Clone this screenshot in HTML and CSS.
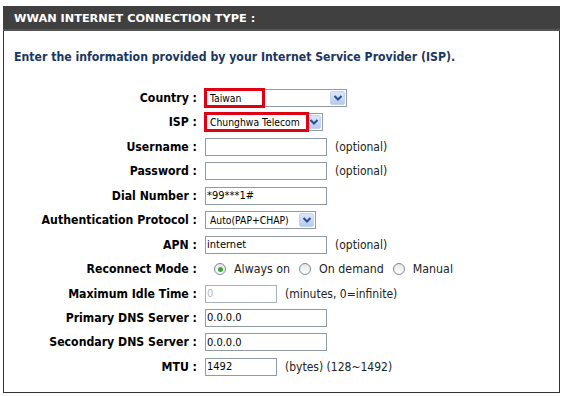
FILE: index.html
```html
<!DOCTYPE html>
<html lang="en">
<head>
    <meta charset="UTF-8">
    <title>WWAN Internet Connection Type</title>
    <link rel="stylesheet" href="styles.css">
</head>
<body>
<div class="panel">
    <h2 class="panel-title">WWAN INTERNET CONNECTION TYPE :</h2>
    <div class="panel-body">
        <p class="intro">Enter the information provided by your Internet Service Provider (ISP).</p>

        <div class="form">
            <label class="label">Country :</label>
            <div class="field">
                <div class="select select-wide">
                    <span class="select-value">Taiwan</span>
                    <span class="select-btn"><svg width="10" height="8" viewBox="0 0 10 8"><path d="M1.5 2 L5 5.5 L8.5 2" fill="none" stroke="#2a4d8f" stroke-width="2"/></svg></span>
                    <span class="mark mark-country"></span>
                </div>
            </div>

            <label class="label">ISP :</label>
            <div class="field">
                <div class="select select-isp">
                    <span class="select-value">Chunghwa Telecom</span>
                    <span class="select-btn"><svg width="10" height="8" viewBox="0 0 10 8"><path d="M1.5 2 L5 5.5 L8.5 2" fill="none" stroke="#2a4d8f" stroke-width="2"/></svg></span>
                    <span class="mark mark-isp"></span>
                </div>
            </div>

            <label class="label">Username :</label>
            <div class="field"><input class="text" type="text"><span class="note">(optional)</span></div>

            <label class="label">Password :</label>
            <div class="field"><input class="text" type="password"><span class="note">(optional)</span></div>

            <label class="label">Dial Number :</label>
            <div class="field"><input class="text" type="text" value="*99***1#"></div>

            <label class="label">Authentication Protocol :</label>
            <div class="field">
                <div class="select select-mid">
                    <span class="select-value">Auto(PAP+CHAP)</span>
                    <span class="select-btn"><svg width="10" height="8" viewBox="0 0 10 8"><path d="M1.5 2 L5 5.5 L8.5 2" fill="none" stroke="#2a4d8f" stroke-width="2"/></svg></span>
                </div>
            </div>

            <label class="label">APN :</label>
            <div class="field"><input class="text" type="text" value="internet"><span class="note">(optional)</span></div>

            <label class="label">Reconnect Mode :</label>
            <div class="field radios">
                <span class="radio checked"></span><span class="radio-text">Always on</span>
                <span class="radio"></span><span class="radio-text">On demand</span>
                <span class="radio"></span><span class="radio-text">Manual</span>
            </div>

            <label class="label">Maximum Idle Time :</label>
            <div class="field"><input class="text short" type="text" value="0" disabled><span class="note">(minutes, 0=infinite)</span></div>

            <label class="label">Primary DNS Server :</label>
            <div class="field"><input class="text" type="text" value="0.0.0.0"></div>

            <label class="label">Secondary DNS Server :</label>
            <div class="field"><input class="text" type="text" value="0.0.0.0"></div>

            <label class="label">MTU :</label>
            <div class="field"><input class="text short" type="text" value="1492"><span class="note">(bytes) (128~1492)</span></div>
        </div>
    </div>
</div>
</body>
</html>
```

FILE: styles.css
```css
body {
    margin: 0;
    padding: 0;
    background-color: #fff;
    font-family: "DejaVu Sans", Verdana, sans-serif;
    color: #000;
}

.panel {
    width: 557px;
    margin: 6px 0 0 3px;
}

.panel-title {
    margin: 0;
    height: 25px;
    line-height: 25px;
    padding-left: 11px;
    background-color: #404040;
    border-bottom: 2px solid #555;
    box-sizing: border-box;
    color: #fff;
    font-size: 11.3px;
    font-weight: bold;
}

.panel-body {
    border: 1px solid #333;
    border-top: none;
    height: 362px;
    box-sizing: border-box;
}

.intro {
    margin: 0;
    padding: 18px 0 0 10px;
    line-height: 16px;
    font-size: 12.2px;
    font-weight: bold;
    font-stretch: condensed;
    color: #1b3660;
}

.form {
    display: grid;
    grid-template-columns: 193px 1fr;
    grid-auto-rows: 18px;
    column-gap: 8px;
    row-gap: 6.45px;
    margin-top: 24px;
}

.label {
    text-align: right;
    font-size: 12.2px;
    font-weight: bold;
    font-stretch: condensed;
    line-height: 18px;
}

.field {
    display: flex;
    align-items: center;
}

.text {
    width: 122px;
    height: 18px;
    box-sizing: border-box;
    margin: 0;
    padding: 0 1px;
    border: 1px solid #8f9aa6;
    font-family: "DejaVu Sans", sans-serif;
    font-stretch: condensed;
    font-size: 11px;
    color: #000;
    background: #fff;
}

.text.short {
    width: 72px;
}

.text:disabled {
    color: #b8b8b8;
    border-color: #a8b0b8;
}

.note {
    margin-left: 8px;
    font-size: 12px;
    font-stretch: condensed;
    color: #222;
}

.select {
    position: relative;
    display: flex;
    align-items: center;
    height: 18px;
    box-sizing: border-box;
    border: 1px solid #8f9aa6;
    background: #fff;
    font-size: 10.3px;
    font-stretch: condensed;
}

.select-wide {
    width: 142px;
}

.select-isp {
    width: 118px;
}

.select-mid {
    width: 111px;
}

.select-value {
    flex: 1;
    padding-left: 4px;
    white-space: nowrap;
    overflow: hidden;
}

.select-btn {
    flex: none;
    width: 15px;
    height: 14px;
    margin-right: 1px;
    display: flex;
    align-items: center;
    justify-content: center;
    background: linear-gradient(#dbe6fb, #b7cbef);
    border: 1px solid #c3d3f0;
    border-radius: 2px;
    box-sizing: border-box;
}

.mark {
    position: absolute;
    top: -2px;
    left: -2px;
    height: 20px;
    border: 3px solid #e00012;
    box-sizing: border-box;
}

.mark-country {
    width: 61px;
}

.mark-isp {
    width: 105px;
}

.radios {
    font-size: 12.3px;
    font-stretch: condensed;
    color: #222;
}

.radio {
    width: 12px;
    height: 12px;
    box-sizing: border-box;
    border-radius: 50%;
    border: 1px solid #7a8a9a;
    background: linear-gradient(#e6e6e0, #fff);
    margin: 0 8px 0 9px;
    display: inline-flex;
    align-items: center;
    justify-content: center;
}

.radio.checked::after {
    content: "";
    width: 5px;
    height: 5px;
    border-radius: 50%;
    background: #3da53d;
}
```
